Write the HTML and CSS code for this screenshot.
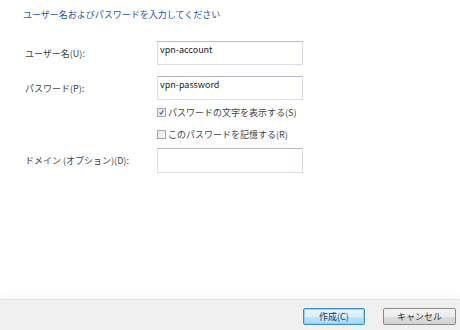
FILE: index.html
```html
<!DOCTYPE html>
<html lang="ja">
<head>
  <meta charset="UTF-8">
  <title>VPN 接続</title>
  <link rel="stylesheet" href="styles.css">
</head>
<body>
  <div class="dialog">
    <div class="content">
      <div class="title">ユーザー名およびパスワードを入力してください</div>

      <div class="form">
        <div class="row">
          <label class="label">ユーザー名(U):</label>
          <input class="field" type="text" value="vpn-account">
        </div>
        <div class="row">
          <label class="label">パスワード(P):</label>
          <input class="field" type="text" value="vpn-password">
        </div>
        <div class="check-row first">
          <span class="box checked">
            <svg viewBox="0 0 9 9" width="9" height="9"><path d="M2 4.5 L3.8 6.5 L7 1.8" stroke="#2a5fb0" stroke-width="1.4" fill="none"/></svg>
          </span>
          パスワードの文字を表示する(S)
        </div>
        <div class="check-row">
          <span class="box"></span>
          このパスワードを記憶する(R)
        </div>
        <div class="row domain">
          <label class="label">ドメイン (オプション)(D):</label>
          <input class="field" type="text" value="">
        </div>
      </div>
    </div>

    <div class="footer">
      <button class="btn primary">作成(C)</button>
      <button class="btn">キャンセル</button>
    </div>
  </div>
</body>
</html>
```

FILE: styles.css
```css
* {
  margin: 0;
  padding: 0;
  box-sizing: border-box;
  font-family: "Noto Sans CJK JP", "Noto Sans", sans-serif;
}

body {
  background-color: #ffffff;
  width: 460px;
  height: 330px;
  overflow: hidden;
}

.dialog {
  display: flex;
  flex-direction: column;
  height: 330px;
}

.content {
  flex-grow: 1;
  padding: 8px 0 0 23px;
}

.title {
  font-size: 9px;
  line-height: 14px;
  color: #2456a8;
}

.form {
  margin-top: 19px;
  padding-left: 2px;
  display: flex;
  flex-direction: column;
}

.row {
  display: flex;
  align-items: center;
  height: 24px;
  margin-bottom: 11px;
}

.label {
  width: 132px;
  font-size: 9px;
  color: #444444;
}

.field {
  width: 146px;
  height: 24px;
  border: 1px solid #d9dee6;
  border-top-color: #b5b9c0;
  padding: 1px 2px 9px;
  font-size: 9px;
  color: #222222;
  font-family: "Noto Sans CJK JP", "Noto Sans", sans-serif;
  outline: none;
}

.check-row {
  display: flex;
  align-items: center;
  gap: 2px;
  height: 16px;
  margin-left: 132px;
  margin-bottom: 6px;
  font-size: 9px;
  color: #444444;
}

.check-row.first {
  margin-top: -7px;
}

.box {
  width: 9px;
  height: 9px;
  border: 1px solid #a4a8ae;
  background: linear-gradient(135deg, #e2e4e8, #fbfbfc);
  display: flex;
  align-items: center;
  justify-content: center;
}

.box svg {
  display: block;
}

.row.domain {
  margin-bottom: 0;
  height: 25px;
}

.row.domain .field {
  height: 25px;
}

.footer {
  height: 31px;
  border-top: 1px solid #e2e2e2;
  background-color: #f0f0f0;
  box-shadow: 0 -6px 8px rgba(0, 0, 0, 0.025);
  display: flex;
  justify-content: flex-end;
  align-items: flex-start;
  gap: 18px;
  padding: 8px 4px 0 0;
}

.btn {
  height: 17px;
  width: 73px;
  font-size: 9px;
  color: #333333;
  border: 1px solid #8a8a8a;
  border-radius: 2px;
  background: linear-gradient(#f4f4f4 0%, #ebebeb 50%, #dddddd 51%, #d3d3d3 100%);
  font-family: "Noto Sans CJK JP", "Noto Sans", sans-serif;
  line-height: 14px;
}

.btn.primary {
  width: 62px;
  border-color: #3c8fc8;
  box-shadow: inset 0 0 0 1px #8fd4f5;
  background: linear-gradient(#eaf6fd 0%, #d9f0fc 50%, #bee6fd 51%, #a7d9f5 100%);
  color: #1d3b63;
}
```
